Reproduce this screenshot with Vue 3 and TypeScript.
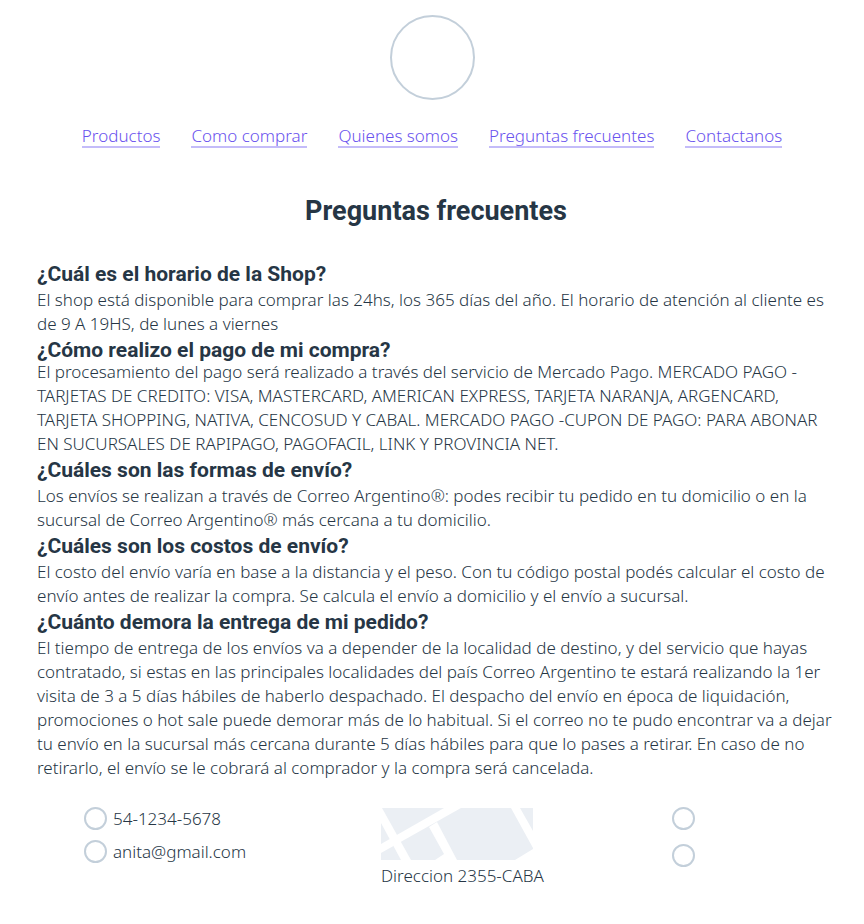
<script setup lang="ts">
interface NavLink {
  label: string
  href: string
}

interface Question {
  title: string
  lines: string[]
  compact?: boolean
}

const links: NavLink[] = [
  { label: 'Productos', href: '#productos' },
  { label: 'Como comprar', href: '#como-comprar' },
  { label: 'Quienes somos', href: '#quienes-somos' },
  { label: 'Preguntas frecuentes', href: '#preguntas' },
  { label: 'Contactanos', href: '#contacto' },
]

const questions: Question[] = [
  {
    title: '¿Cuál es el horario de la Shop?',
    lines: [
      'El shop está disponible para comprar las 24hs, los 365 días del año. El horario de atención al cliente es',
      'de 9 A 19HS, de lunes a viernes',
    ],
  },
  {
    title: '¿Cómo realizo el pago de mi compra?',
    compact: true,
    lines: [
      'El procesamiento del pago será realizado a través del servicio de Mercado Pago. MERCADO PAGO -',
      'TARJETAS DE CREDITO: VISA, MASTERCARD, AMERICAN EXPRESS, TARJETA NARANJA, ARGENCARD,',
      'TARJETA SHOPPING, NATIVA, CENCOSUD Y CABAL. MERCADO PAGO -CUPON DE PAGO: PARA ABONAR',
      'EN SUCURSALES DE RAPIPAGO, PAGOFACIL, LINK Y PROVINCIA NET.',
    ],
  },
  {
    title: '¿Cuáles son las formas de envío?',
    lines: [
      'Los envíos se realizan a través de Correo Argentino®: podes recibir tu pedido en tu domicilio o en la',
      'sucursal de Correo Argentino® más cercana a tu domicilio.',
    ],
  },
  {
    title: '¿Cuáles son los costos de envío?',
    lines: [
      'El costo del envío varía en base a la distancia y el peso. Con tu código postal podés calcular el costo de',
      'envío antes de realizar la compra. Se calcula el envío a domicilio y el envío a sucursal.',
    ],
  },
  {
    title: '¿Cuánto demora la entrega de mi pedido?',
    lines: [
      'El tiempo de entrega de los envíos va a depender de la localidad de destino, y del servicio que hayas',
      'contratado, si estas en las principales localidades del país Correo Argentino te estará realizando la 1er',
      'visita de 3 a 5 días hábiles de haberlo despachado. El despacho del envío en época de liquidación,',
      'promociones o hot sale puede demorar más de lo habitual. Si el correo no te pudo encontrar va a dejar',
      'tu envío en la sucursal más cercana durante 5 días hábiles para que lo pases a retirar. En caso de no',
      'retirarlo, el envío se le cobrará al comprador y la compra será cancelada.',
    ],
  },
]
</script>

<template>
  <div class="page">
    <header class="header">
      <svg class="logo" viewBox="0 0 85 85" aria-hidden="true">
        <circle cx="42.5" cy="42.5" r="41.5" />
      </svg>
      <nav class="nav">
        <a v-for="link in links" :key="link.href" class="nav-link" :href="link.href">{{ link.label }}</a>
      </nav>
    </header>

    <main class="main">
      <h1 class="title">Preguntas frecuentes</h1>
      <section v-for="q in questions" :key="q.title" class="question" :class="{ compact: q.compact }">
        <h2 class="question-title">{{ q.title }}</h2>
        <p class="answer">
          <span v-for="line in q.lines" :key="line" class="line">{{ line }}</span>
        </p>
      </section>
    </main>

    <footer class="footer">
      <ul class="contact">
        <li class="contact-item">
          <svg class="dot" viewBox="0 0 23 23" aria-hidden="true"><circle cx="11.5" cy="11.5" r="10.5" /></svg>
          <span>54-1234-5678</span>
        </li>
        <li class="contact-item">
          <svg class="dot" viewBox="0 0 23 23" aria-hidden="true"><circle cx="11.5" cy="11.5" r="10.5" /></svg>
          <span>anita@gmail.com</span>
        </li>
      </ul>
      <div class="place">
        <svg class="map" viewBox="0 0 152 52" aria-hidden="true">
          <rect width="152" height="52" fill="#ebeff4" />
          <g fill="#fff">
            <path d="M0 36L63 0H80L0 45Z" />
            <path d="M0 0H1L30 52H20L0 15Z" />
            <path d="M48 19L56 14L76 52H54L63 46Z" />
            <path d="M130 0H139L152 23V40Z" />
            <path d="M134 52L152 41V52Z" />
          </g>
        </svg>
        <address class="address">Direccion 2355-CABA</address>
      </div>
      <div class="social">
        <svg class="dot" viewBox="0 0 23 23" aria-hidden="true"><circle cx="11.5" cy="11.5" r="10.5" /></svg>
        <svg class="dot" viewBox="0 0 23 23" aria-hidden="true"><circle cx="11.5" cy="11.5" r="10.5" /></svg>
      </div>
    </footer>
  </div>
</template>

<style>
body {
  margin: 0;
  background: #fff;
}
</style>

<style scoped>
.page {
  padding: 15px 0 36px;
  color: #263645;
  font-family: "Noto Sans", "Open Sans", sans-serif;
  font-size: 17px;
  font-weight: 300;
  line-height: 24px;
}

.header {
  display: flex;
  flex-direction: column;
  align-items: center;
}

.logo {
  width: 85px;
  height: 85px;
}

.logo circle,
.dot circle {
  fill: none;
  stroke: #c3cfda;
  stroke-width: 2;
}

.nav {
  display: flex;
  justify-content: center;
  gap: 31px;
  margin-top: 26px;
}

.nav-link {
  border-bottom: 2px solid #c4bcf9;
  color: #6952ee;
  line-height: 20px;
  text-decoration: none;
  white-space: nowrap;
}

.main {
  padding: 0 29px 0 37px;
}

.title {
  margin: 45px 0 31px;
  font-family: Roboto, "Liberation Sans", sans-serif;
  font-size: 27px;
  font-weight: 700;
  line-height: 36px;
  text-align: center;
}

.question-title {
  margin: 0;
  padding: 4px 0;
  font-family: Roboto, "Liberation Sans", sans-serif;
  font-size: 21px;
  font-weight: 700;
  line-height: 20px;
}

.compact .question-title {
  padding-bottom: 0;
}

.answer {
  margin: 0;
}

.line {
  display: block;
}

.footer {
  display: grid;
  grid-template-columns: 297px 291px 1fr;
  padding: 27px 37px 0 84px;
}

.contact {
  display: flex;
  flex-direction: column;
  gap: 10px;
  margin: 0;
  padding: 0;
  list-style: none;
}

.contact-item {
  display: flex;
  align-items: center;
  gap: 6px;
  line-height: 23px;
}

.dot {
  display: block;
  width: 23px;
  height: 23px;
}

.map {
  display: block;
  width: 152px;
  height: 52px;
  margin-top: 1px;
}

.address {
  margin-top: 4px;
  font-style: normal;
}

.social {
  display: flex;
  flex-direction: column;
  gap: 14px;
}
</style>
